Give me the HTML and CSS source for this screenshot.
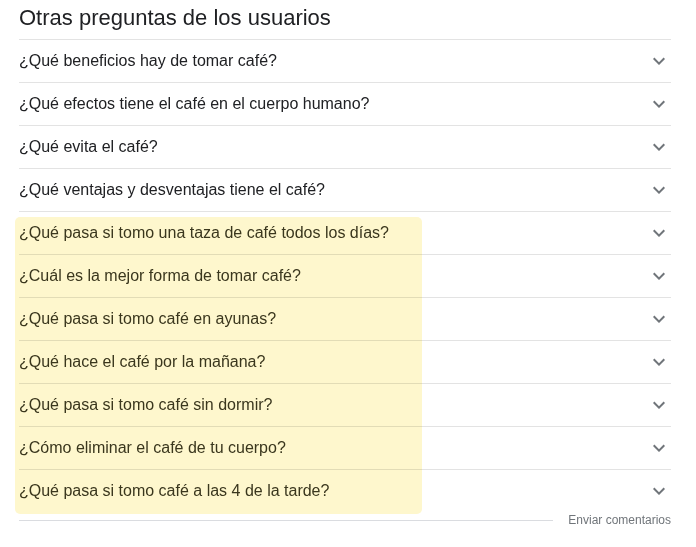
FILE: index.html
```html
<!DOCTYPE html>
<html lang="es">
<head>
    <meta charset="UTF-8">
    <title>Otras preguntas de los usuarios</title>
    <link rel="stylesheet" href="styles.css">
</head>
<body>
    <div class="paa">
        <h2 class="paa-title">Otras preguntas de los usuarios</h2>
        <div class="paa-list">
            <div class="paa-row"><span>¿Qué beneficios hay de tomar café?</span><svg class="chev" viewBox="0 0 24 24"><path d="M7.41 8.59 12 13.17l4.59-4.58L18 10l-6 6-6-6z"/></svg></div>
            <div class="paa-row"><span>¿Qué efectos tiene el café en el cuerpo humano?</span><svg class="chev" viewBox="0 0 24 24"><path d="M7.41 8.59 12 13.17l4.59-4.58L18 10l-6 6-6-6z"/></svg></div>
            <div class="paa-row"><span>¿Qué evita el café?</span><svg class="chev" viewBox="0 0 24 24"><path d="M7.41 8.59 12 13.17l4.59-4.58L18 10l-6 6-6-6z"/></svg></div>
            <div class="paa-row"><span>¿Qué ventajas y desventajas tiene el café?</span><svg class="chev" viewBox="0 0 24 24"><path d="M7.41 8.59 12 13.17l4.59-4.58L18 10l-6 6-6-6z"/></svg></div>
            <div class="paa-row marked"><span>¿Qué pasa si tomo una taza de café todos los días?</span><svg class="chev" viewBox="0 0 24 24"><path d="M7.41 8.59 12 13.17l4.59-4.58L18 10l-6 6-6-6z"/></svg></div>
            <div class="paa-row marked"><span>¿Cuál es la mejor forma de tomar café?</span><svg class="chev" viewBox="0 0 24 24"><path d="M7.41 8.59 12 13.17l4.59-4.58L18 10l-6 6-6-6z"/></svg></div>
            <div class="paa-row marked"><span>¿Qué pasa si tomo café en ayunas?</span><svg class="chev" viewBox="0 0 24 24"><path d="M7.41 8.59 12 13.17l4.59-4.58L18 10l-6 6-6-6z"/></svg></div>
            <div class="paa-row marked"><span>¿Qué hace el café por la mañana?</span><svg class="chev" viewBox="0 0 24 24"><path d="M7.41 8.59 12 13.17l4.59-4.58L18 10l-6 6-6-6z"/></svg></div>
            <div class="paa-row marked"><span>¿Qué pasa si tomo café sin dormir?</span><svg class="chev" viewBox="0 0 24 24"><path d="M7.41 8.59 12 13.17l4.59-4.58L18 10l-6 6-6-6z"/></svg></div>
            <div class="paa-row marked"><span>¿Cómo eliminar el café de tu cuerpo?</span><svg class="chev" viewBox="0 0 24 24"><path d="M7.41 8.59 12 13.17l4.59-4.58L18 10l-6 6-6-6z"/></svg></div>
            <div class="paa-row marked"><span>¿Qué pasa si tomo café a las 4 de la tarde?</span><svg class="chev" viewBox="0 0 24 24"><path d="M7.41 8.59 12 13.17l4.59-4.58L18 10l-6 6-6-6z"/></svg></div>
            <!-- resaltado amarillo sobre las preguntas nuevas -->
            <div class="paa-highlight"></div>
        </div>
        <div class="paa-footer">
            <span class="paa-rule"></span>
            <span class="paa-feedback">Enviar comentarios</span>
        </div>
    </div>
</body>
</html>
```

FILE: styles.css
```css
html, body {
    margin: 0;
    padding: 0;
    background: #fff;
}
body {
    font-family: 'Liberation Sans', Arial, Helvetica, sans-serif;
    color: #202124;
}
.paa {
    width: 652px;
    padding-left: 19px;
}
.paa-title {
    margin: 0;
    height: 39px;
    font-size: 22px;
    font-weight: normal;
    line-height: 35px;
    color: #202124;
}
.paa-list {
    position: relative;
}
.paa-row {
    height: 42px;
    border-top: 1px solid #e3e3e3;
    display: flex;
    align-items: center;
    justify-content: space-between;
    font-size: 16px;
}
.paa-row.marked span {
    color: #3a3824;
}
.chev {
    width: 24px;
    height: 24px;
    fill: #70757a;
}
/* marcador encima de las filas */
.paa-highlight {
    position: absolute;
    left: -4px;
    top: 178px;
    width: 407px;
    height: 297px;
    border-radius: 5px;
    background: #fef7cd;
    mix-blend-mode: multiply;
}
.paa-footer {
    height: 16px;
    display: flex;
    align-items: center;
}
.paa-rule {
    flex: 1;
    height: 1px;
    background: #dadce0;
    margin-right: 15px;
}
.paa-feedback {
    font-size: 12px;
    color: #70757a;
}
```
